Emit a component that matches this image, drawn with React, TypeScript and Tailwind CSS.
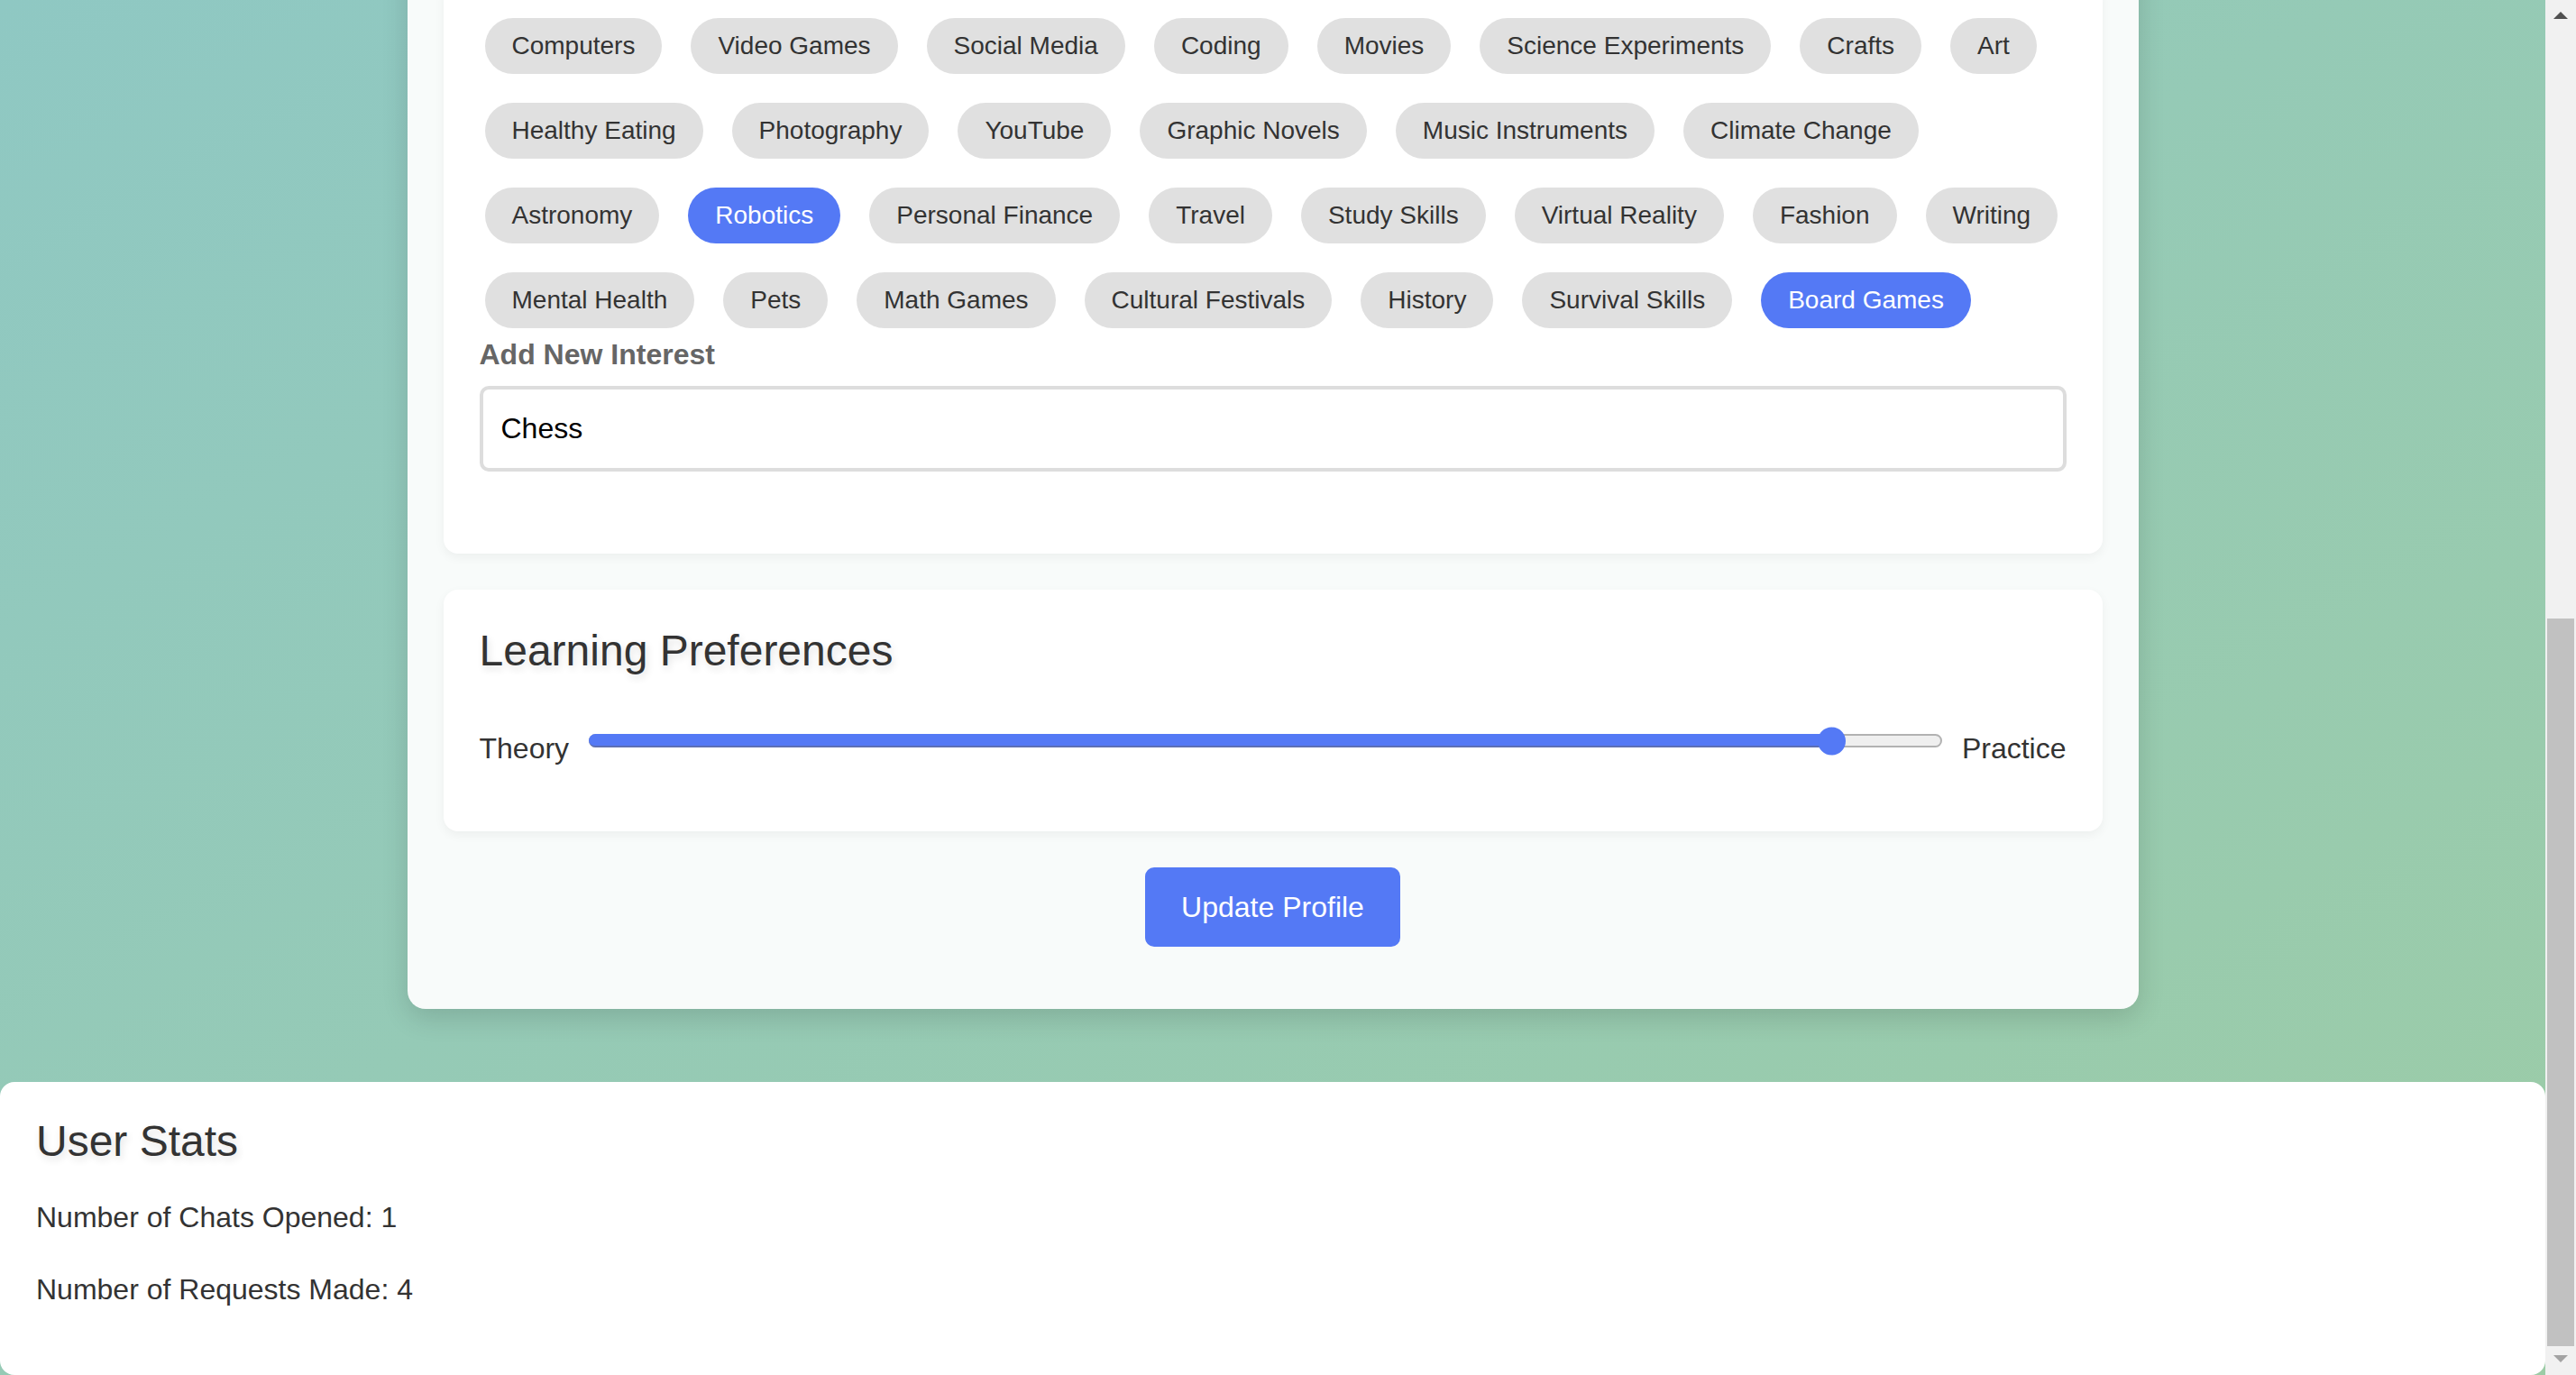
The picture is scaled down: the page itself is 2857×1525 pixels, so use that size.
import React from "react";

const interests = [
  "Computers",
  "Video Games",
  "Social Media",
  "Coding",
  "Movies",
  "Science Experiments",
  "Crafts",
  "Art",
  "Healthy Eating",
  "Photography",
  "YouTube",
  "Graphic Novels",
  "Music Instruments",
  "Climate Change",
  "Astronomy",
  "Robotics",
  "Personal Finance",
  "Travel",
  "Study Skills",
  "Virtual Reality",
  "Fashion",
  "Writing",
  "Mental Health",
  "Pets",
  "Math Games",
  "Cultural Festivals",
  "History",
  "Survival Skills",
  "Board Games",
];

const selected = ["Robotics", "Board Games"];

const Scrollbar = () => (
  <div className="flex h-full w-[34px] shrink-0 flex-col bg-[#f1f1f1]">
    <div className="flex h-[34px] justify-center pt-[12px]">
      <svg width="16" height="9" viewBox="0 0 16 9">
        <polygon points="0,9 8,1 16,9" fill="#505050" />
      </svg>
    </div>
    <div className="flex-1" />
    <div className="mx-[2px] h-[807px] bg-[#c1c1c1]" />
    <div className="flex h-[32px] justify-center pt-[10px]">
      <svg width="16" height="9" viewBox="0 0 16 9">
        <polygon points="0,0 16,0 8,8" fill="#a3a3a3" />
      </svg>
    </div>
  </div>
);

const App = () => {
  return (
    <div className="flex h-[1525px] w-full overflow-hidden font-['Liberation_Sans',Arial,sans-serif] text-[#333]">
      <div className="flex min-w-0 flex-1 flex-col justify-end overflow-hidden bg-linear-to-br from-[#8fc8c3] to-[#9ccca6]">
        {/* profile form card, scrolled so only its lower part shows */}
        <div className="mx-auto w-[1920px] shrink-0 rounded-[20px] bg-[#f8fbfa] px-[40px] pt-[40px] pb-[69px] shadow-[0_10px_30px_rgba(0,0,0,0.14)]">
          <section className="rounded-[16px] bg-white px-[40px] pt-[40px] pb-[91px] shadow-[0_4px_12px_rgba(0,0,0,0.05)]">
            <div className="ml-[6px] flex flex-wrap gap-[32px]">
              {interests.map((item) => (
                <button
                  key={item}
                  type="button"
                  className={
                    selected.includes(item)
                      ? "flex h-[62px] items-center rounded-full bg-[#5479f5] px-[30px] text-[28px] leading-[32px] text-white"
                      : "flex h-[62px] items-center rounded-full bg-[#e0e0e0] px-[30px] text-[28px] leading-[32px] text-[#333]"
                  }
                >
                  {item}
                </button>
              ))}
            </div>
            <label className="mt-[11px] block text-[32px] leading-[37px] font-bold text-[#666]">
              Add New Interest
            </label>
            <input
              type="text"
              defaultValue="Chess"
              className="mt-[16px] block h-[95px] w-full rounded-[10px] border-4 border-[#dddddd] bg-white px-[20px] text-[32px] text-black outline-none"
            />
          </section>

          <section className="mt-[40px] rounded-[16px] bg-white px-[40px] pt-[40px] pb-[73px] shadow-[0_4px_12px_rgba(0,0,0,0.05)]">
            <h2 className="text-[48px] leading-[56px] [text-shadow:2px_4px_8px_rgba(0,0,0,0.12)]">
              Learning Preferences
            </h2>
            <div className="mt-[62px] flex h-[37px] items-start gap-[22px]">
              <span className="text-[32px] leading-[37px]">Theory</span>
              <div className="relative mt-[2px] h-[15px] flex-1 rounded-full border-2 border-[#b2b2b2] bg-[#efefef]">
                <div className="absolute top-[-2px] bottom-[-2px] left-[-2px] w-[1378px] rounded-l-full border-b-2 border-[#5d6fb4] bg-[#5479f5]" />
                <div className="absolute top-1/2 left-[1361px] h-[31px] w-[31px] -translate-y-1/2 rounded-full bg-[#5479f5]" />
              </div>
              <span className="text-[32px] leading-[37px]">Practice</span>
            </div>
          </section>

          <div className="mt-[40px] flex justify-center">
            <button
              type="button"
              className="h-[88px] rounded-[10px] bg-[#5479f5] px-[40px] text-[32px] leading-[37px] text-white"
            >
              Update Profile
            </button>
          </div>
        </div>

        {/* stats */}
        <div className="mt-[81px] h-[325px] shrink-0 rounded-[16px] bg-white px-[40px] pt-[38px]">
          <h2 className="text-[48px] leading-[56px] [text-shadow:2px_4px_8px_rgba(0,0,0,0.12)]">
            User Stats
          </h2>
          <p className="mt-[38px] text-[32px] leading-[37px]">
            Number of Chats Opened: 1
          </p>
          <p className="mt-[43px] text-[32px] leading-[37px]">
            Number of Requests Made: 4
          </p>
        </div>
      </div>
      <Scrollbar />
    </div>
  );
};

export default App;
